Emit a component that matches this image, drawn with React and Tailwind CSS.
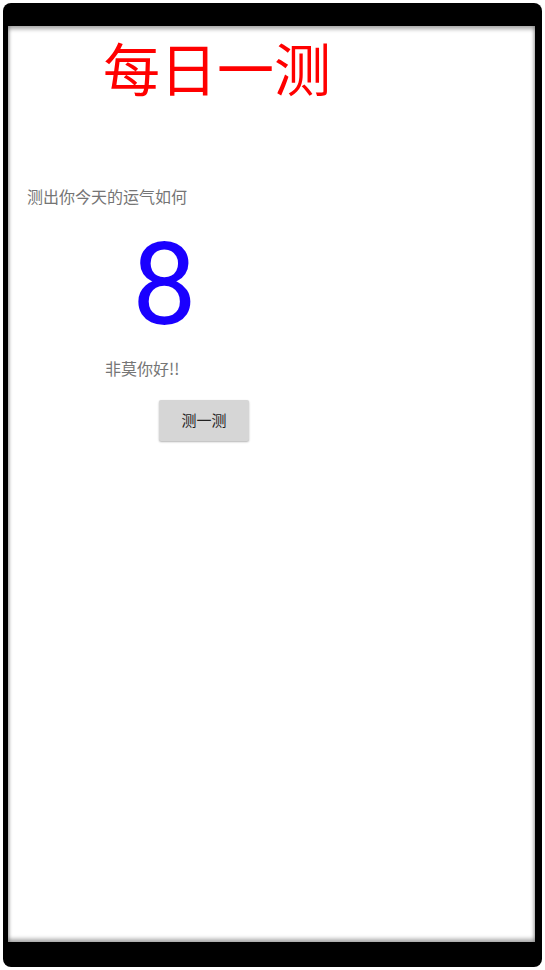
export default function App() {
  const cjk = { fontFamily: '"Noto Sans CJK SC", "Noto Sans", sans-serif' };
  return (
    <div className="w-[545px] h-[970px] bg-white p-[3px]">
      <div className="w-full h-full bg-black rounded-[8px] pl-[5px] pr-[7px] pt-[23px] pb-[25px]">
        <div className="relative w-full h-full bg-white shadow-[inset_0_3px_4px_rgba(0,0,0,0.35),inset_0_-3px_4px_rgba(0,0,0,0.35)] overflow-hidden">
          <div className="flex flex-col items-start" style={cjk}>
            <div className="ml-[95px] mt-[12px] text-[57px] leading-[56px] text-[#ff0000]">每日一测</div>
            <div className="ml-[19px] mt-[92px] text-[16px] leading-[20px] text-[#757575]">测出你今天的运气如何</div>
            <div className="ml-[124px] mt-[19px] text-[115px] leading-[120px] text-[#1a00ff]" style={{ fontFamily: 'Roboto, sans-serif' }}>8</div>
            <div className="ml-[97px] mt-[13px] text-[16px] leading-[20px] text-[#757575]">非莫你好!!</div>
            <button className="ml-[151px] mt-[22px] w-[90px] h-[41px] bg-[#d6d6d6] rounded-[2px] shadow-[0_1px_2px_rgba(0,0,0,0.3)] text-[15px] text-[#222]">测一测</button>
          </div>
        </div>
      </div>
    </div>
  );
}
